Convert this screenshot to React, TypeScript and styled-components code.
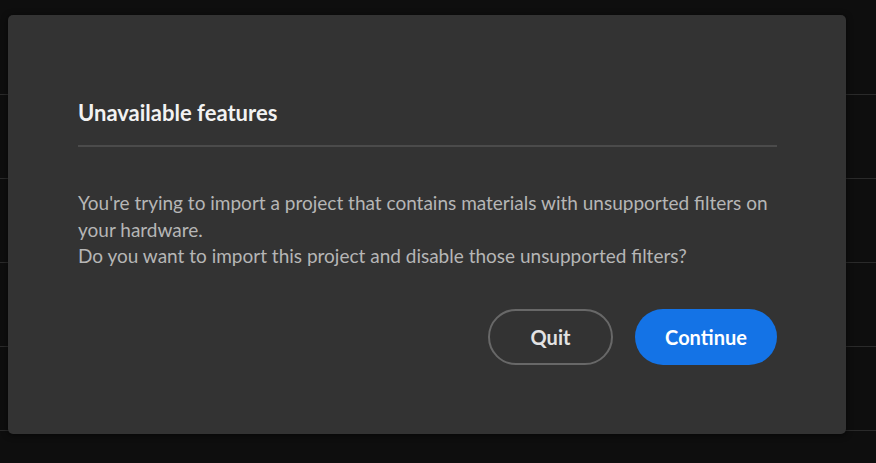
import React from 'react';
import styled, { createGlobalStyle } from 'styled-components';

const GlobalStyle = createGlobalStyle`
  html, body {
    margin: 0;
    padding: 0;
    background: #0e0e0e;
  }
  body {
    font-family: Lato, "Noto Sans", sans-serif;
  }
`;

const Page = styled.div`
  position: relative;
  width: 876px;
  height: 463px;
  overflow: hidden;
  background: #0e0e0e;
`;

const Rows = styled.div`
  display: flex;
  flex-direction: column;
  padding-top: 11px;
`;

const Row = styled.div`
  height: 83px;
  border-bottom: 1px solid #2a2a2a;
`;

const Dialog = styled.div`
  position: absolute;
  left: 8px;
  top: 15px;
  width: 838px;
  height: 419px;
  box-sizing: border-box;
  padding: 84px 69px 0 70px;
  background: #333333;
  border-radius: 5px;
  box-shadow: 0 1px 6px rgba(0, 0, 0, 0.6);
  display: flex;
  flex-direction: column;
`;

const Title = styled.h2`
  margin: 0;
  font-size: 22px;
  line-height: 28px;
  font-weight: 700;
  color: #f2f2f2;
`;

const Divider = styled.div`
  height: 2px;
  margin-top: 18px;
  background: #4b4b4b;
`;

const Body = styled.p`
  margin: 43px 0 0;
  font-size: 19px;
  line-height: 26.5px;
  color: #b6b6b6;
`;

const Footer = styled.div`
  display: flex;
  justify-content: flex-end;
  gap: 22px;
  margin-top: 39px;
`;

const Button = styled.button<{ $primary?: boolean }>`
  box-sizing: border-box;
  height: 56px;
  padding: 0;
  border-radius: 28px;
  font-family: Lato, "Noto Sans", sans-serif;
  font-size: 20px;
  font-weight: 700;
  cursor: pointer;
  width: ${(p) => (p.$primary ? '142px' : '125px')};
  border: ${(p) => (p.$primary ? 'none' : '2px solid #686868')};
  background: ${(p) => (p.$primary ? '#1473e6' : 'transparent')};
  color: ${(p) => (p.$primary ? '#ffffff' : '#e3e3e3')};
`;

export default function App() {
  return (
    <Page>
      <GlobalStyle />
      <Rows>
        {[0, 1, 2, 3, 4].map((i) => (
          <Row key={i} />
        ))}
      </Rows>
      <Dialog>
        <Title>Unavailable features</Title>
        <Divider />
        <Body>
          You're trying to import a project that contains materials with unsupported filters on
          your hardware.
          <br />
          Do you want to import this project and disable those unsupported filters?
        </Body>
        <Footer>
          <Button>Quit</Button>
          <Button $primary>Continue</Button>
        </Footer>
      </Dialog>
    </Page>
  );
}
